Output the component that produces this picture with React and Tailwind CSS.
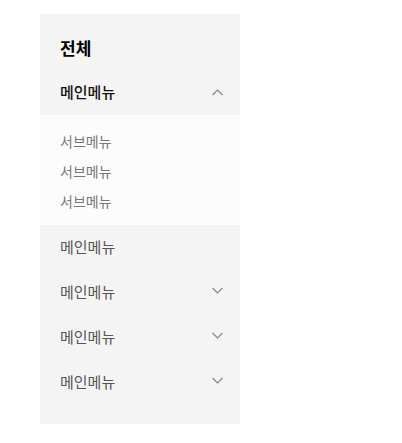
import React from 'react';

const font = { fontFamily: '"Noto Sans CJK KR", "Noto Sans", sans-serif' };

// small caret used on the accordion rows
const Chevron = ({ up }) => (
    <svg width="11" height="7" viewBox="0 0 11 7" fill="none" className="text-[#888]">
        <path
            d={up ? 'M0.5 6 L5.5 1 L10.5 6' : 'M0.5 1 L5.5 6 L10.5 1'}
            stroke="currentColor"
            strokeWidth="1.2"
        />
    </svg>
);

const App = () => {
    const subItems = ['서브메뉴', '서브메뉴', '서브메뉴'];
    const mainItems = [
        { name: '메인메뉴', arrow: false },
        { name: '메인메뉴', arrow: true },
        { name: '메인메뉴', arrow: true },
        { name: '메인메뉴', arrow: true },
    ];

    return (
        <div className="w-[402px] h-[443px] bg-white pt-[14px] pl-[40px]" style={font}>
            <aside className="w-[200px] bg-[#f4f4f4] pb-[19px]">
                <div className="px-[20px] pt-[22px] pb-[10px]">
                    <h2 className="text-[17px] leading-[24px] font-bold text-black">전체</h2>
                </div>

                {/* open menu */}
                <div className="h-[45px] pl-[20px] pr-[17px] flex items-center justify-between">
                    <span className="text-[15px] font-medium text-[#111]">메인메뉴</span>
                    <span className="flex mb-[1px]"><Chevron up /></span>
                </div>
                <ul className="bg-[#fcfcfc] h-[110px] px-[20px] pt-[11px]">
                    {subItems.map((s, i) => (
                        <li key={i} className="h-[30px] flex items-center text-[14px] text-[#777]">{s}</li>
                    ))}
                </ul>

                {mainItems.map((item, i) => (
                    <div key={i} className="h-[45px] pl-[20px] pr-[17px] flex items-center justify-between">
                        <span className="text-[15px] text-[#555]">{item.name}</span>
                        {item.arrow && <span className="flex mb-[5px]"><Chevron /></span>}
                    </div>
                ))}
            </aside>
        </div>
    );
};

export default App;
